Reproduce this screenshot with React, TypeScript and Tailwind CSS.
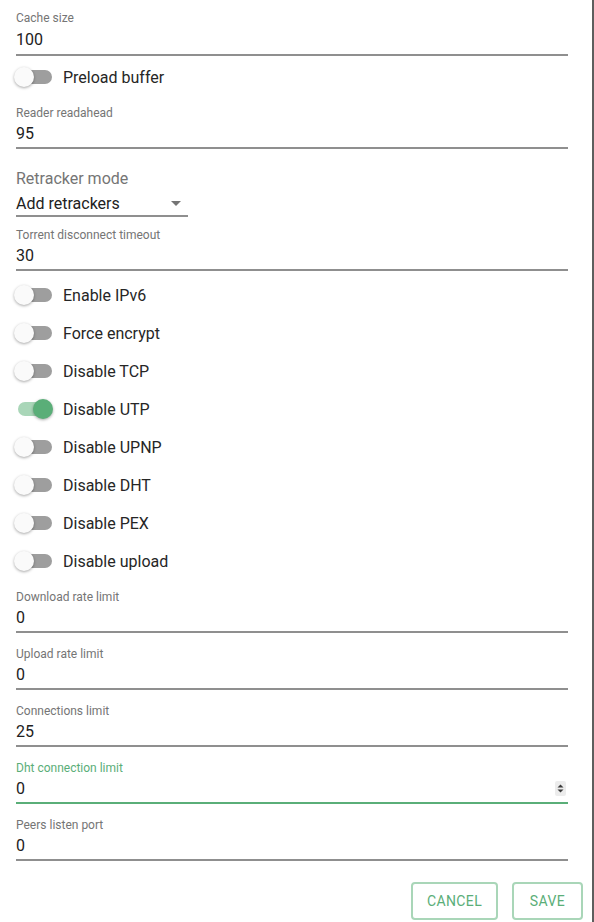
import { useState } from "react";

type FieldProps = {
  label: string;
  value: string;
  focused?: boolean;
  spinner?: boolean;
  loose?: boolean;
  className?: string;
};

const Field = ({ label, value, focused, spinner, loose, className }: FieldProps) => (
  <div className={className}>
    <p
      className={`text-[12px] leading-[14px] ${
        focused ? "text-[#5aae78]" : "text-[#757575]"
      }`}
    >
      {label}
    </p>
    <div
      className={`flex items-center justify-between border-b-2 ${
        loose ? "mt-[5px] pb-[5px]" : "mt-[4px] pb-[4px]"
      } ${focused ? "border-[#5aae78]" : "border-[#8f8f8f]"}`}
    >
      <span className="text-[16px] leading-[19px] text-[#212121]">{value}</span>
      {spinner && (
        <span className="mr-[2px] flex h-[15px] w-[11px] items-center justify-center rounded-[2px] bg-[#ececec]">
          <svg width="7" height="9" viewBox="0 0 7 9">
            <path d="M3.5 0.5 L6.5 3.5 L0.5 3.5 Z" fill="#3a3a3a" />
            <path d="M0.5 5.5 L6.5 5.5 L3.5 8.5 Z" fill="#3a3a3a" />
          </svg>
        </span>
      )}
    </div>
  </div>
);

const Toggle = ({ label, initial = false }: { label: string; initial?: boolean }) => {
  const [on, setOn] = useState(initial);
  return (
    <button
      onClick={() => setOn(!on)}
      className="flex h-[38px] w-full items-center text-left"
    >
      <span className="relative h-[38px] w-[47px] shrink-0">
        <span
          className={`absolute left-[2px] top-[12px] h-[14px] w-[34px] rounded-full ${
            on ? "bg-[#a9d6b8]" : "bg-[#9e9e9e]"
          }`}
        />
        <span
          className={`absolute top-[9px] h-[20px] w-[20px] rounded-full shadow-[0_1px_3px_rgba(0,0,0,0.35)] ${
            on ? "left-[17px] bg-[#5aae78]" : "left-[-2px] bg-[#fafafa]"
          }`}
        />
      </span>
      <span className="text-[16px] leading-[19px] text-[#262626]">{label}</span>
    </button>
  );
};

export default function App() {
  return (
    <div className="min-h-[922px] w-[594px] overflow-hidden border-r-2 border-[#5e5e5e] bg-white font-['Roboto',sans-serif]">
      <div className="pl-[16px] pr-[24px]">
        <Field label="Cache size" value="100" loose className="pt-[11px]" />
        <div className="mt-[2px]">
          <Toggle label="Preload buffer" />
        </div>
        <Field label="Reader readahead" value="95" className="mt-[10px]" />

        <div className="mt-[20px]">
          <p className="text-[16px] leading-[19px] text-[#757575]">Retracker mode</p>
          <div className="mt-[6px] flex w-[172px] items-center justify-between border-b-2 border-[#8f8f8f] pb-[2px]">
            <span className="text-[16px] leading-[19px] text-[#212121]">Add retrackers</span>
            <svg width="10" height="5" viewBox="0 0 10 5" className="mr-[7px]">
              <path d="M0 0 L10 0 L5 5 Z" fill="#757575" />
            </svg>
          </div>
        </div>

        <Field label="Torrent disconnect timeout" value="30" className="mt-[11px]" />

        <div className="mt-[5px]">
          <Toggle label="Enable IPv6" />
          <Toggle label="Force encrypt" />
          <Toggle label="Disable TCP" />
          <Toggle label="Disable UTP" initial />
          <Toggle label="Disable UPNP" />
          <Toggle label="Disable DHT" />
          <Toggle label="Disable PEX" />
          <Toggle label="Disable upload" />
        </div>

        <Field label="Download rate limit" value="0" className="mt-[10px]" />
        <Field label="Upload rate limit" value="0" className="mt-[14px]" />
        <Field label="Connections limit" value="25" className="mt-[14px]" />
        <Field label="Dht connection limit" value="0" focused spinner className="mt-[14px]" />
        <Field label="Peers listen port" value="0" className="mt-[14px]" />
      </div>

      <div className="mt-[21px] flex justify-end gap-[14px] pr-[9px]">
        <button className="h-[38px] w-[87px] rounded-[4px] border-2 border-[#a9d6b8] text-[14px] tracking-[0.4px] text-[#5aae78]">
          CANCEL
        </button>
        <button className="h-[38px] w-[71px] rounded-[4px] border-2 border-[#a9d6b8] text-[14px] tracking-[0.4px] text-[#5aae78]">
          SAVE
        </button>
      </div>
    </div>
  );
}
